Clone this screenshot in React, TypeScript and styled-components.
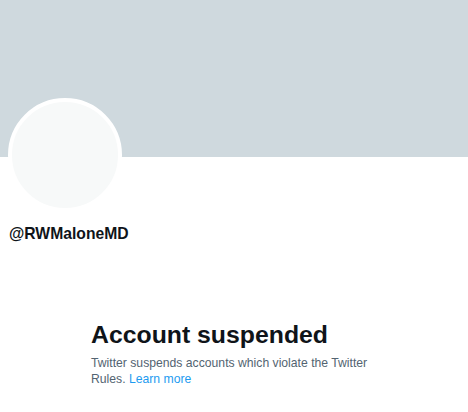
import React from "react";
import styled, { createGlobalStyle } from "styled-components";

const GlobalStyle = createGlobalStyle`
  html, body {
    margin: 0;
    padding: 0;
    background: #fff;
    font-family: "Liberation Sans", Arial, sans-serif;
  }
`;

const Page = styled.div`
  width: 468px;
  height: 412px;
  overflow: hidden;
  background: #fff;
`;

const Banner = styled.div`
  height: 157px;
  background: #cfd9de;
`;

const ProfileHead = styled.div`
  padding: 0 0 0 8px;
  margin-top: -59px;
`;

const Avatar = styled.div`
  width: 106px;
  height: 106px;
  border-radius: 50%;
  border: 4px solid #fff;
  background: #f7f9f9;
`;

const Handle = styled.div`
  margin-top: 12px;
  padding-left: 1px;
  font-weight: 700;
  font-size: 15.7px;
  line-height: 20px;
  color: #0f1419;
`;

const Notice = styled.div`
  padding: 76px 0 0 91px;
  width: 290px;
`;

const Title = styled.h1`
  margin: 0;
  font-size: 24.8px;
  line-height: 30px;
  font-weight: 700;
  color: #0f1419;
`;

const Body = styled.p`
  margin: 5px 0 0;
  font-size: 12.2px;
  line-height: 16px;
  color: #536471;
`;

const Link = styled.a`
  color: #1d9bf0;
  text-decoration: none;
`;

const App = () => {
  return (
    <Page>
      <GlobalStyle />
      <Banner />
      <ProfileHead>
        <Avatar />
        <Handle>@RWMaloneMD</Handle>
      </ProfileHead>
      <Notice>
        <Title>Account suspended</Title>
        <Body>
          Twitter suspends accounts which violate the Twitter Rules.{" "}
          <Link href="#">Learn more</Link>
        </Body>
      </Notice>
    </Page>
  );
};

export default App;
